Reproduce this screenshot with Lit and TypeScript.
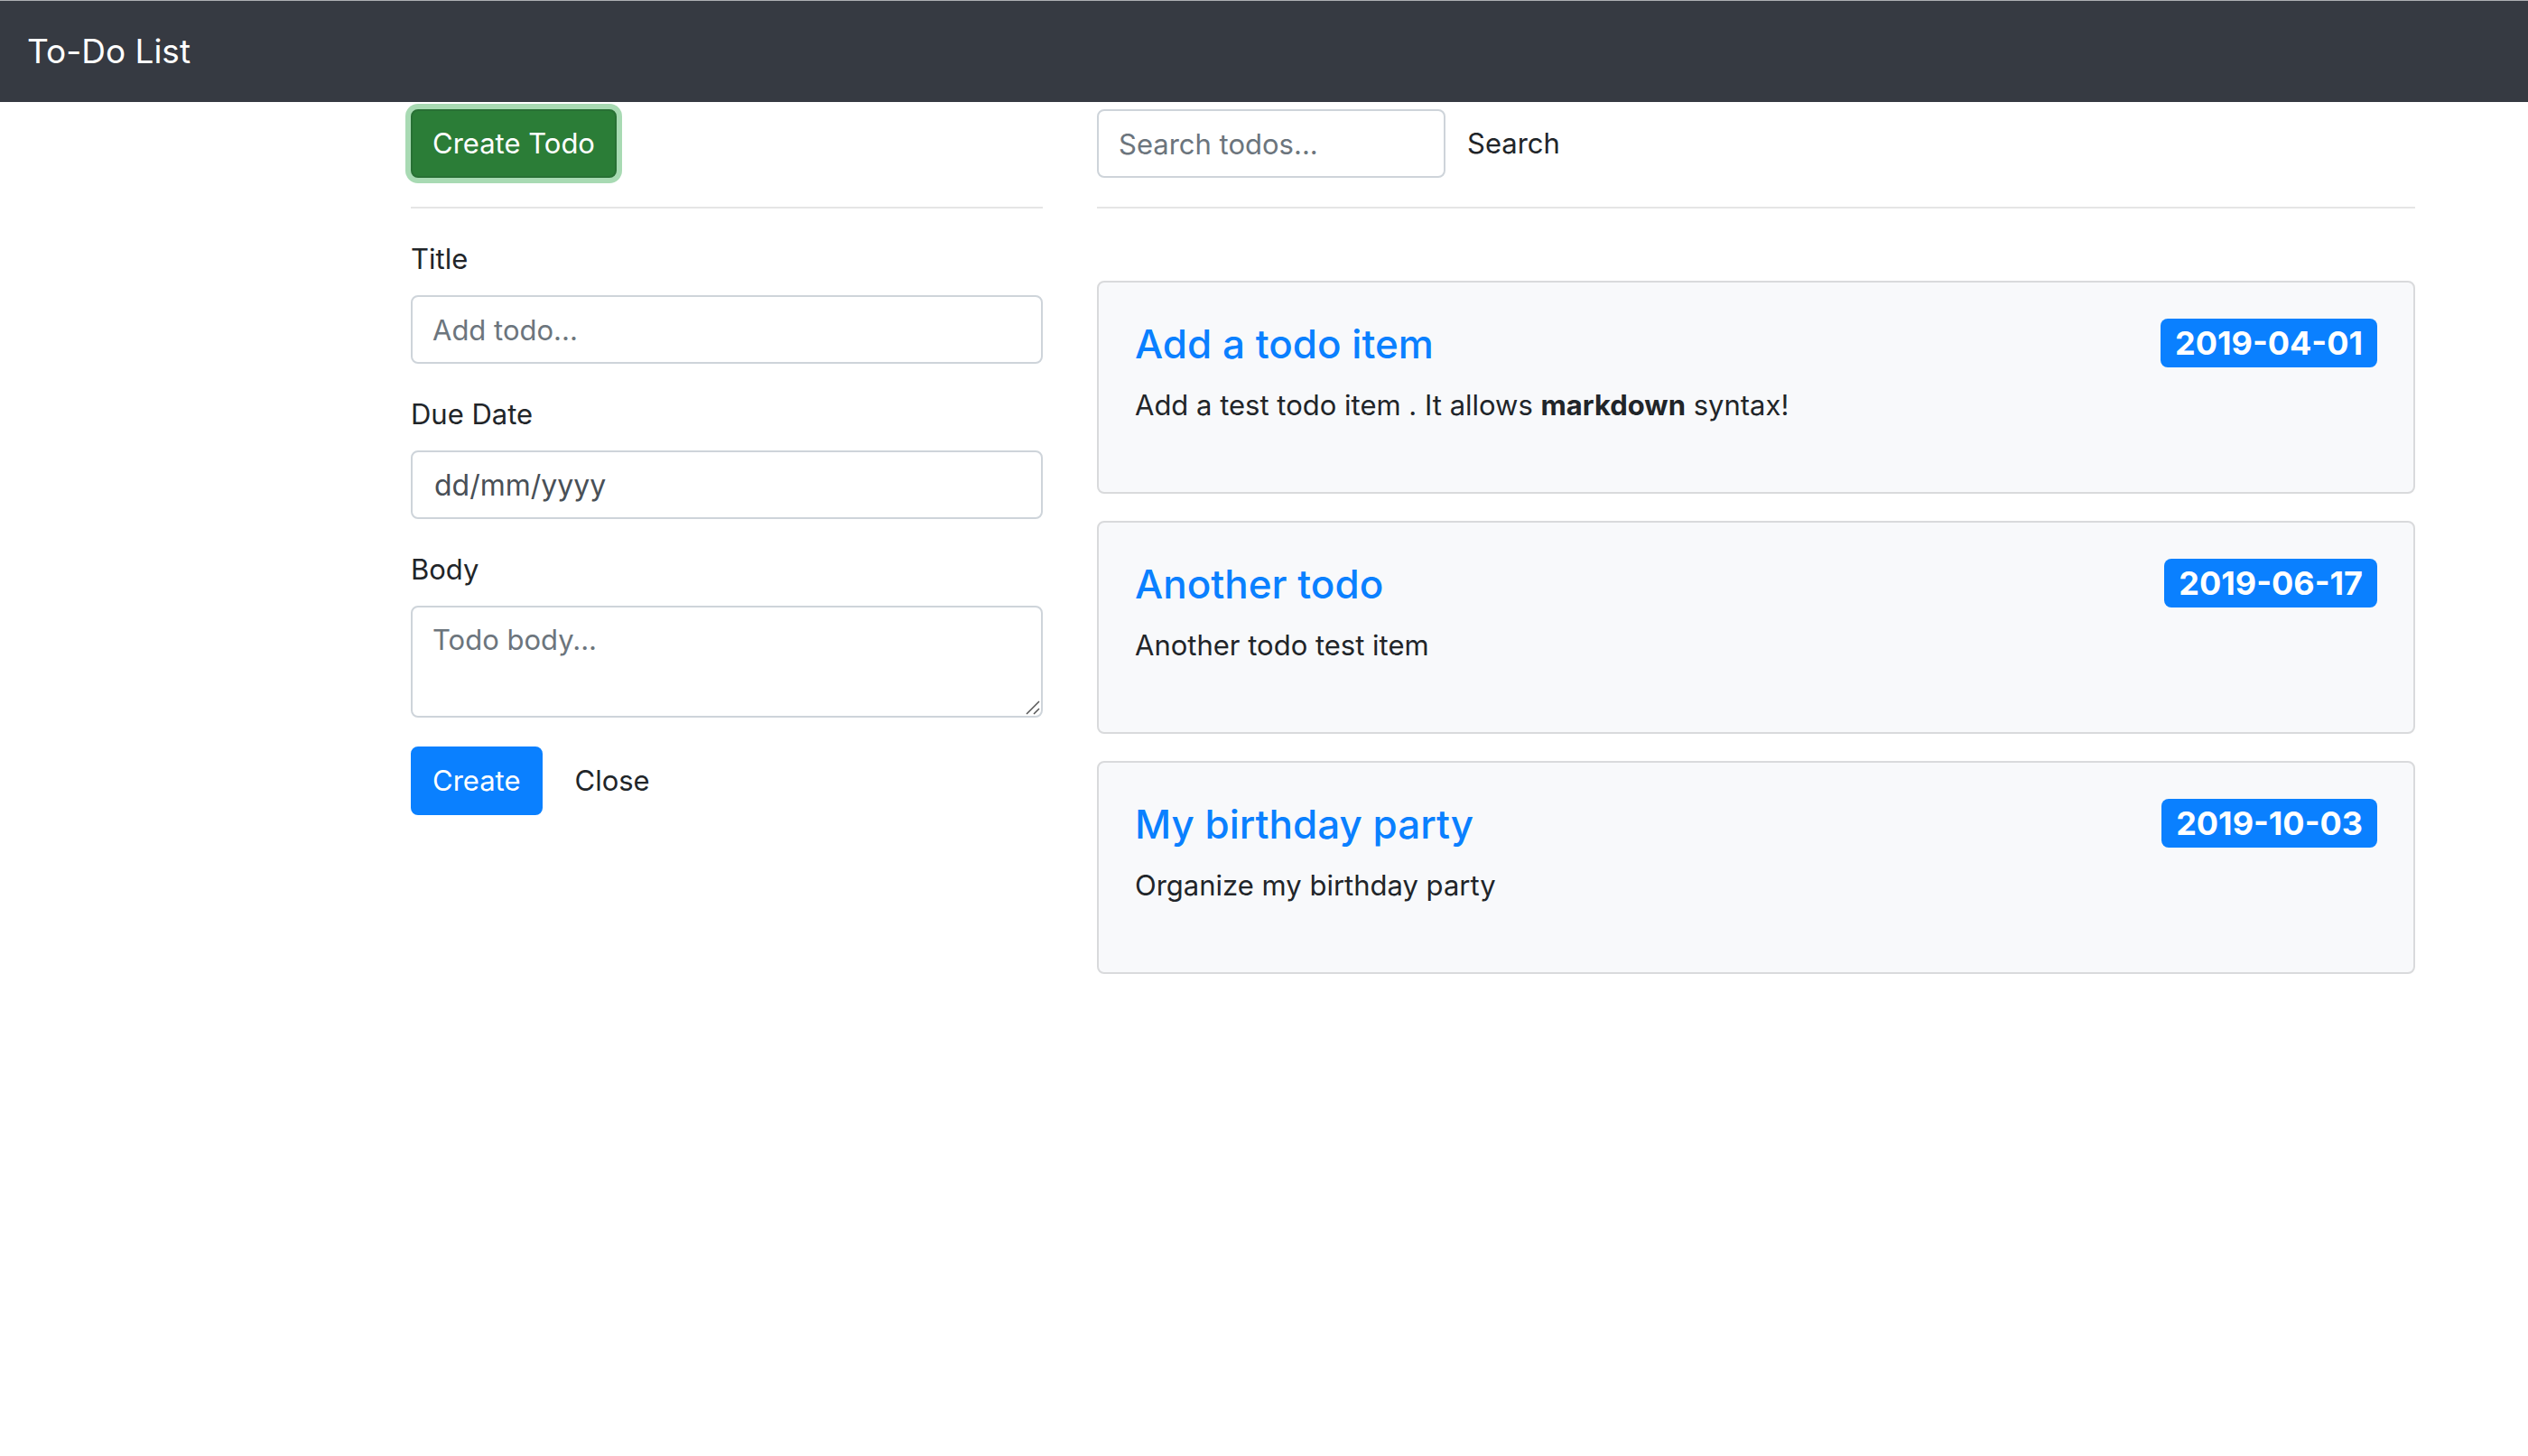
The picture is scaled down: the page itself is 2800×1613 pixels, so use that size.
import { LitElement, html, css, type TemplateResult } from "lit";
import { customElement, state } from "lit/decorators.js";

interface Todo {
  title: string;
  due: string;
  body: TemplateResult;
}

@customElement("app-root")
export class AppRoot extends LitElement {
  static styles = css`
    :host {
      display: block;
      min-height: 100vh;
      background: #fff;
      color: #212529;
      font-family: Inter, "Liberation Sans", sans-serif;
      font-size: 31px;
      line-height: 48px;
    }
    * {
      box-sizing: border-box;
    }
    .navbar {
      display: flex;
      align-items: center;
      padding: 26px 30px;
      border-top: 1px solid #aeb0b3;
      background: #363a42;
    }
    .brand {
      color: #fff;
      font-size: 37px;
      line-height: 60px;
      text-decoration: none;
    }
    .layout {
      display: grid;
      grid-template-columns: minmax(0, 1fr) minmax(0, 2fr);
      padding: 8px 95px 0 425px;
    }
    .column {
      padding: 0 30px;
    }
    .button {
      font: inherit;
      padding: 12px 22px;
      border: 2px solid transparent;
      border-radius: 8px;
      background: transparent;
      color: #212529;
      white-space: nowrap;
      cursor: pointer;
    }
    .toggle {
      display: block;
      background: #2b7d37;
      border-color: #287034;
      color: #fff;
      box-shadow: 0 0 0 6px #a8dab3;
      outline: none;
    }
    .primary {
      background: #0a80ff;
      border-color: #0a80ff;
      color: #fff;
    }
    .rule {
      margin: 32px 0;
      border: 0;
      border-top: 2px solid #e5e5e5;
    }
    .group {
      margin-bottom: 32px;
    }
    .label {
      display: block;
      margin-bottom: 16px;
    }
    .control {
      display: block;
      width: 100%;
      height: 76px;
      margin: 0;
      padding: 12px 22px;
      border: 2px solid #ced4da;
      border-radius: 8px;
      background: #fff;
      color: #495057;
      font: inherit;
      outline: none;
    }
    .control::placeholder {
      color: #6c757d;
      opacity: 1;
    }
    .date {
      padding: 12px 24px;
      font-size: 32px;
    }
    .date::placeholder {
      color: #495057;
    }
    .area {
      position: relative;
    }
    .text {
      height: 124px;
      resize: vertical;
      overflow: hidden;
    }
    .text::-webkit-resizer {
      display: none;
    }
    .grip {
      position: absolute;
      right: 3px;
      bottom: 3px;
      width: 16px;
      height: 16px;
      pointer-events: none;
    }
    .actions {
      display: flex;
      gap: 12px;
    }
    .search {
      display: flex;
    }
    .query {
      width: 386px;
    }
    .list {
      display: grid;
      gap: 30px;
      margin: 80px 0 0;
      padding: 0;
      list-style: none;
    }
    .card {
      display: flex;
      justify-content: space-between;
      align-items: flex-start;
      padding: 40px;
      border: 2px solid #d9dadc;
      border-radius: 8px;
      background: #f8f9fb;
    }
    .title {
      margin: 0 0 16px;
      font-size: 44px;
      font-weight: 500;
      line-height: 56px;
    }
    .link {
      color: #0a80ff;
      text-decoration: none;
    }
    .note {
      margin: 0 0 32px;
    }
    .note strong {
      font-weight: 700;
    }
    .badge {
      padding: 9px 16px;
      border-radius: 8px;
      background: #0a80ff;
      color: #fff;
      font-size: 36px;
      font-weight: 700;
      line-height: 36px;
      white-space: nowrap;
    }
  `;

  @state() private formOpen = true;

  private todos: Todo[] = [
    {
      title: "Add a todo item",
      due: "2019-04-01",
      body: html`Add a test todo item . It allows <strong>markdown</strong> syntax!`,
    },
    { title: "Another todo", due: "2019-06-17", body: html`Another todo test item` },
    { title: "My birthday party", due: "2019-10-03", body: html`Organize my birthday party` },
  ];

  private open = () => {
    this.formOpen = true;
  };

  private close = () => {
    this.formOpen = false;
  };

  private submit(event: Event) {
    event.preventDefault();
  }

  private renderForm() {
    return html`
      <form @submit=${this.submit}>
        <div class="group">
          <label class="label" for="title">Title</label>
          <input class="control" id="title" type="text" placeholder="Add todo..." />
        </div>
        <div class="group">
          <label class="label" for="due">Due Date</label>
          <input class="control date" id="due" type="text" inputmode="numeric" placeholder="dd/mm/yyyy" />
        </div>
        <div class="group">
          <label class="label" for="body">Body</label>
          <div class="area">
            <textarea class="control text" id="body" placeholder="Todo body..."></textarea>
            <svg class="grip" viewBox="0 0 16 16" fill="none" stroke="#555" stroke-width="1.5" aria-hidden="true">
              <path d="M1 15 15 1M9 15l6-6" />
            </svg>
          </div>
        </div>
        <div class="actions">
          <button class="button primary" type="submit">Create</button>
          <button class="button" type="button" @click=${this.close}>Close</button>
        </div>
      </form>
    `;
  }

  private renderTodo(todo: Todo) {
    return html`
      <li class="card">
        <div>
          <h4 class="title"><a class="link" href="#">${todo.title}</a></h4>
          <p class="note">${todo.body}</p>
        </div>
        <time class="badge" datetime=${todo.due}>${todo.due}</time>
      </li>
    `;
  }

  render() {
    return html`
      <nav class="navbar"><a class="brand" href="#">To-Do List</a></nav>
      <main class="layout">
        <section class="column">
          <button class="button toggle" type="button" @click=${this.open}>Create Todo</button>
          <hr class="rule" />
          ${this.formOpen ? this.renderForm() : null}
        </section>
        <section class="column">
          <form class="search" role="search" @submit=${this.submit}>
            <input class="control query" type="search" placeholder="Search todos..." aria-label="Search todos" />
            <button class="button" type="submit">Search</button>
          </form>
          <hr class="rule" />
          <ul class="list">
            ${this.todos.map((todo) => this.renderTodo(todo))}
          </ul>
        </section>
      </main>
    `;
  }
}
